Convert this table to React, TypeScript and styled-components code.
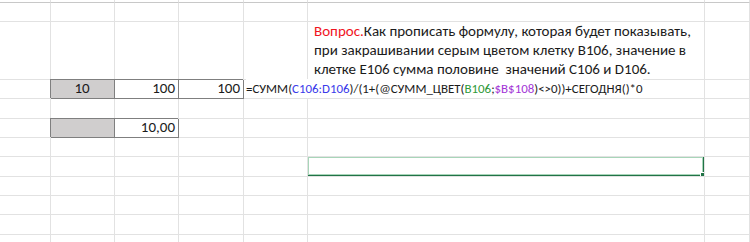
import styled, { createGlobalStyle } from "styled-components";

const GRID = "#e2e2e2";
const EDGE = "#7f7f7f";

const GlobalStyle = createGlobalStyle`
  html, body {
    margin: 0;
    padding: 0;
    background: #ffffff;
  }
  body {
    font-family: Carlito, Calibri, Lato, "Liberation Sans", sans-serif;
    color: #1b1b1b;
  }
`;

type Align = "left" | "center" | "right";

interface CellDef {
  text?: React.ReactNode;
  align?: Align;
  fill?: boolean;
  boxed?: boolean;
  selected?: boolean;
  overflow?: boolean;
  question?: boolean;
}

const ROW_HEIGHTS = [3, 19, 58, 19, 20, 19, 19, 20, 19, 19, 20, 12];
const COLS = 7;

const Formula = () => (
  <FormulaText>
    =СУММ(<Ref $color="#3b3bea">C106:D106</Ref>)/(1+(@СУММ_ЦВЕТ(
    <Ref $color="#2f9a3a">B106</Ref>;<Ref $color="#a335d6">$B$108</Ref>
    )&lt;&gt;0))+СЕГОДНЯ()*0
  </FormulaText>
);

const Question = () => (
  <QuestionText>
    <Red>Вопрос.</Red>Как прописать формулу, которая будет показывать,
    {"\n"}при закрашивании серым цветом клетку B106, значение в
    {"\n"}клетке E106 сумма половине  значений C106 и D106.
  </QuestionText>
);

const cells: Record<string, CellDef> = {
  "2-5": { question: true, text: <Question />, overflow: true },
  "3-1": { text: "10", align: "center", fill: true, boxed: true },
  "3-2": { text: "100", align: "right", boxed: true },
  "3-3": { text: "100", align: "right", boxed: true },
  "3-4": { text: <Formula />, overflow: true },
  "5-1": { fill: true, boxed: true },
  "5-2": { text: "10,00", align: "right", boxed: true },
  "7-5": { selected: true },
};

export default function App() {
  return (
    <>
      <GlobalStyle />
      <Sheet>
        {ROW_HEIGHTS.map((h, r) =>
          Array.from({ length: COLS }).map((_, c) => {
            const def = cells[`${r}-${c}`] || {};
            return (
              <Cell
                key={`${r}-${c}`}
                $align={def.align || "left"}
                $fill={!!def.fill}
                $boxed={!!def.boxed}
                $overflow={!!def.overflow}
                $top={r === 0}
                $question={!!def.question}
              >
                {def.text}
                {def.selected && (
                  <Selection>
                    <Handle />
                  </Selection>
                )}
              </Cell>
            );
          })
        )}
      </Sheet>
    </>
  );
}

const Sheet = styled.div`
  display: grid;
  width: 750px;
  height: 242px;
  overflow: hidden;
  grid-template-columns: 51px 64px 64px 65px 64px 397px 1fr;
  grid-template-rows: ${ROW_HEIGHTS.map((h) => `${h}px`).join(" ")};
`;

const Cell = styled.div<{
  $align: Align;
  $fill: boolean;
  $boxed: boolean;
  $overflow: boolean;
  $top: boolean;
  $question: boolean;
}>`
  position: relative;
  box-sizing: border-box;
  display: flex;
  align-items: flex-end;
  justify-content: ${(p) =>
    p.$align === "center"
      ? "center"
      : p.$align === "right"
      ? "flex-end"
      : "flex-start"};
  padding: ${(p) => (p.$question ? "0 0 0 6px" : "0 3px 0 2px")};
  font-size: 15px;
  line-height: 19px;
  white-space: nowrap;
  overflow: ${(p) => (p.$overflow ? "visible" : "hidden")};
  z-index: ${(p) => (p.$overflow ? 2 : p.$boxed ? 1 : 0)};
  background: ${(p) => (p.$fill ? "#d0cece" : "transparent")};
  border-right: 1px solid ${(p) => (p.$boxed ? EDGE : GRID)};
  border-bottom: 1px solid
    ${(p) => (p.$boxed ? EDGE : p.$top ? "#c8c8c8" : GRID)};
  box-shadow: ${(p) => (p.$boxed ? `-1px -1px 0 ${EDGE}` : "none")};
`;

const QuestionText = styled.div`
  white-space: pre;
  font-size: 15px;
  line-height: 19px;
  color: #1b1b1b;
`;

const Red = styled.span`
  color: #f0141e;
`;

const FormulaText = styled.div`
  font-size: 12.9px;
  line-height: 19px;
  color: #1b1b1b;
  background: #ffffff;
`;

const Ref = styled.span<{ $color: string }>`
  color: ${(p) => p.$color};
`;

const Selection = styled.div`
  position: absolute;
  left: -2px;
  top: -2px;
  right: -1px;
  bottom: -1px;
  border: 2px solid #217346;
  box-shadow: inset 0 0 0 1px #a8d5b9;
  pointer-events: none;
`;

const Handle = styled.div`
  position: absolute;
  right: -4px;
  bottom: -4px;
  width: 5px;
  height: 5px;
  background: #217346;
  border: 1px solid #ffffff;
`;
